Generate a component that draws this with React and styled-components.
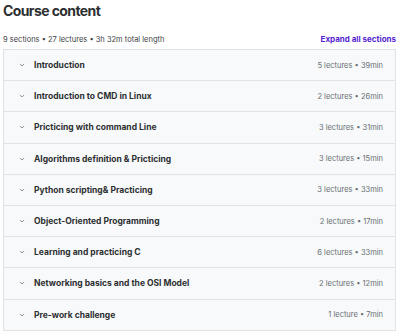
import React from "react";
import styled, { createGlobalStyle } from "styled-components";

const GlobalStyle = createGlobalStyle`
  body {
    margin: 0;
    background: #ffffff;
    font-family: Inter, "Noto Sans", sans-serif;
    color: #2d2f31;
  }
`;

const Page = styled.div`
  width: 400px;
  padding: 1px 4px 0 3px;
  box-sizing: border-box;
`;

const Title = styled.h2`
  margin: 0;
  font-size: 14px;
  font-weight: 700;
  letter-spacing: -0.6px;
  line-height: 20px;
`;

const MetaBar = styled.div`
  display: flex;
  justify-content: space-between;
  align-items: center;
  margin-top: 12px;
  height: 12px;
  margin-bottom: 4px;
`;

const Meta = styled.span`
  font-size: 7.5px;
  color: #3e4143;
`;

const ExpandAll = styled.button`
  border: none;
  background: none;
  padding: 0;
  font-family: inherit;
  font-size: 8px;
  font-weight: 700;
  color: #5624d0;
  cursor: pointer;
`;

const List = styled.div`
  border: 1px solid #dfe3e6;
  border-bottom: none;
`;

const Row = styled.div`
  display: flex;
  align-items: center;
  height: 30.2px;
  padding: 0 12px 0 15px;
  background: #f7f9fa;
  border-bottom: 1px solid #dfe3e6;
`;

const Chevron = styled.svg`
  width: 6px;
  height: 6px;
  margin-right: 9px;
  flex-shrink: 0;
`;

const SectionTitle = styled.span`
  flex: 1;
  font-size: 8.5px;
  font-weight: 700;
  color: #2d2f31;
`;

const SectionMeta = styled.span`
  font-size: 7.5px;
  color: #6a6f73;
`;

const sections = [
  ["Introduction", "5 lectures • 39min"],
  ["Introduction to CMD in Linux", "2 lectures • 26min"],
  ["Pricticing with command Line", "3 lectures • 31min"],
  ["Algorithms definition & Pricticing", "3 lectures • 15min"],
  ["Python scripting& Practicing", "3 lectures • 33min"],
  ["Object-Oriented Programming", "2 lectures • 17min"],
  ["Learning and practicing C", "6 lectures • 33min"],
  ["Networking basics and the OSI Model", "2 lectures • 12min"],
  ["Pre-work challenge", "1 lecture • 7min"],
];

export default function App() {
  return (
    <Page>
      <GlobalStyle />
      <Title>Course content</Title>
      <MetaBar>
        <Meta>9 sections • 27 lectures • 3h 32m total length</Meta>
        <ExpandAll>Expand all sections</ExpandAll>
      </MetaBar>
      <List>
        {sections.map(([title, meta]) => (
          <Row key={title}>
            <Chevron viewBox="0 0 10 10">
              <path d="M1.5 3.5 L5 6.5 L8.5 3.5" fill="none" stroke="#6a6f73" strokeWidth="1.2" />
            </Chevron>
            <SectionTitle>{title}</SectionTitle>
            <SectionMeta>{meta}</SectionMeta>
          </Row>
        ))}
      </List>
    </Page>
  );
}
